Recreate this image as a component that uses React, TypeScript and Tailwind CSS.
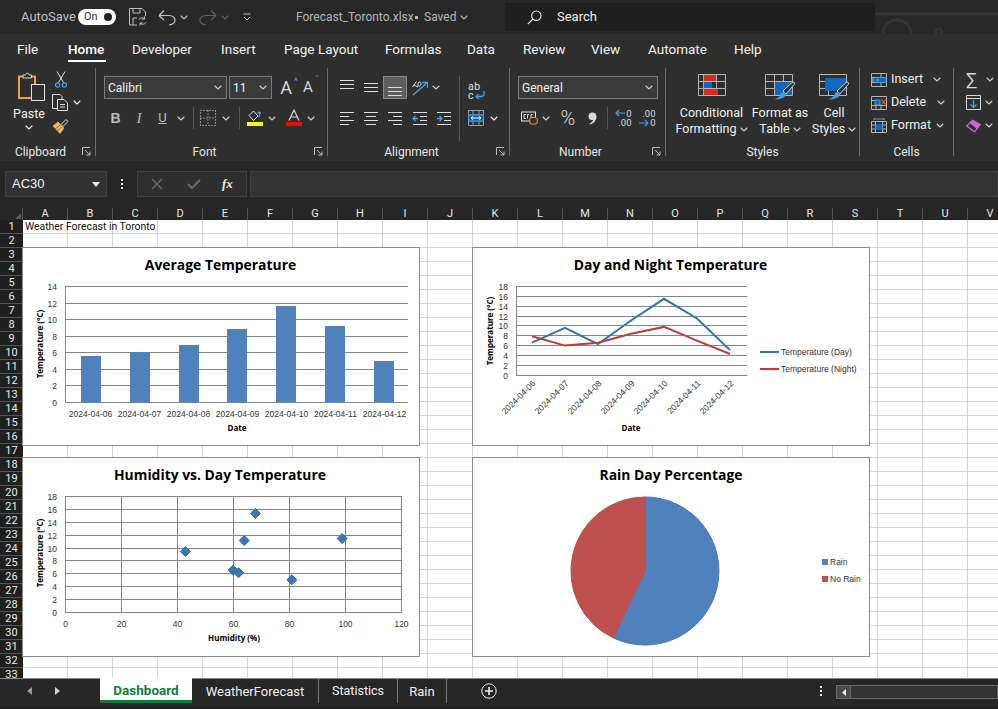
import React from 'react';

const COLS = ['A','B','C','D','E','F','G','H','I','J','K','L','M','N','O','P','Q','R','S','T','U','V'];
const ROWS = Array.from({ length: 33 }, (_, i) => i + 1);

const TABS: [string, string][] = [
  ['File', 'w-[51px]'],
  ['Home', 'w-[64px]'],
  ['Developer', 'w-[89px]'],
  ['Insert', 'w-[63px]'],
  ['Page Layout', 'w-[101px]'],
  ['Formulas', 'w-[82px]'],
  ['Data', 'w-[56px]'],
  ['Review', 'w-[68px]'],
  ['View', 'w-[57px]'],
  ['Automate', 'w-[86px]'],
  ['Help', 'w-[40px]'],
];
const DATES = ['2024-04-06','2024-04-07','2024-04-08','2024-04-09','2024-04-10','2024-04-11','2024-04-12'];

function Chevron({ className = 'text-[#d0d0d0]' }: { className?: string }) {
  return (
    <svg width="8" height="5" viewBox="0 0 8 5" className={`shrink-0 ${className}`}>
      <path d="M0.7 0.8 L4 4 L7.3 0.8" fill="none" stroke="currentColor" strokeWidth="1.2" />
    </svg>
  );
}

function Launcher() {
  return (
    <svg width="9" height="9" viewBox="0 0 9 9" className="absolute bottom-0 right-[4px] text-[#bdbdbd]">
      <path d="M0.5 8V0.5H8" fill="none" stroke="currentColor" />
      <path d="M3 3L8 8M8 4.5V8H4.5" fill="none" stroke="currentColor" />
    </svg>
  );
}

function Group({ label, launcher, className, children }: { label?: string; launcher?: boolean; className: string; children: React.ReactNode }) {
  return (
    <div className={`relative flex h-[88px] shrink-0 flex-col border-r border-[#6a6a6a] ${className}`}>
      <div className="h-[77px]">{children}</div>
      <div className={`h-[11px] text-center text-[12px] leading-[14px] text-[#e6e6e6] ${launcher ? 'pr-[14px]' : ''}`}>{label}</div>
      {launcher && <Launcher />}
    </div>
  );
}

function Slot({ className, children }: { className: string; children?: React.ReactNode }) {
  return <div className={`flex h-full shrink-0 items-center justify-center ${className}`}>{children}</div>;
}

function Lines({ rows }: { rows: number[] }) {
  return (
    <svg width="16" height="20" viewBox="0 0 16 20">
      {rows.map((y) => (
        <path key={y} d={`M1 ${y + 0.5}H15`} stroke="#e0e0e0" />
      ))}
    </svg>
  );
}

function AlignLeft() {
  return (
    <svg width="16" height="14" viewBox="0 0 16 14" stroke="#e0e0e0">
      <path d="M1 1.5H15M1 5.5H10M1 9.5H15M1 13.5H10" />
    </svg>
  );
}
function AlignCenter() {
  return (
    <svg width="16" height="14" viewBox="0 0 16 14" stroke="#e0e0e0">
      <path d="M1 1.5H15M3 5.5H13M1 9.5H15M3 13.5H13" />
    </svg>
  );
}
function AlignRight() {
  return (
    <svg width="16" height="14" viewBox="0 0 16 14" stroke="#e0e0e0">
      <path d="M1 1.5H15M6 5.5H15M1 9.5H15M6 13.5H15" />
    </svg>
  );
}
function Indent({ flip }: { flip?: boolean }) {
  return (
    <svg width="16" height="14" viewBox="0 0 16 14">
      <path d="M1 1.5H15M8 5.5H15M8 9.5H15M1 13.5H15" stroke="#e0e0e0" />
      {flip ? <path d="M1 7.5H6M3.5 5L6 7.5L3.5 10" fill="none" stroke="#3f9fe8" strokeWidth="1.3" /> : <path d="M6 7.5H1M3.5 5L1 7.5L3.5 10" fill="none" stroke="#3f9fe8" strokeWidth="1.3" />}
    </svg>
  );
}

function PasteIcon() {
  return (
    <svg width="28" height="30" viewBox="0 0 28 30" className="ml-[5px]">
      <path d="M1 4.5H17V26H1Z" fill="none" stroke="#e8a33a" strokeWidth="2" />
      <path d="M5 5V3H7.5C8 0.5 10.5 0.5 11 3H13.5V6H5Z" fill="#2e2e2e" stroke="#d8d8d8" />
      <rect x="13.5" y="12.5" width="13" height="16" fill="#2e2e2e" stroke="#e0e0e0" />
    </svg>
  );
}
function ScissorsIcon() {
  return (
    <svg width="12" height="17" viewBox="0 0 12 17" fill="none">
      <path d="M2 0.5L8.5 11.5M10 0.5L3.5 11.5" stroke="#e0e0e0" />
      <circle cx="2.6" cy="14" r="2.1" stroke="#4aa3e8" strokeWidth="1.2" />
      <circle cx="9.4" cy="14" r="2.1" stroke="#4aa3e8" strokeWidth="1.2" />
    </svg>
  );
}
function CopyIcon() {
  return (
    <svg width="17" height="17" viewBox="0 0 17 17" fill="none" stroke="#e0e0e0">
      <path d="M5 14.5H0.5V0.5H8L10 2.5V5" />
      <path d="M5.5 5.5H12L15.5 9V16.5H5.5Z" fill="#2e2e2e" />
      <path d="M8 10.5H13M8 13H13" />
    </svg>
  );
}
function BrushIcon() {
  return (
    <svg width="17" height="16" viewBox="0 0 17 16">
      <path d="M9 6.5L14 1.5L16 3.5L11 8.5Z" fill="none" stroke="#e0e0e0" />
      <path d="M1 8L6 4L12 10L8 15.5Z" fill="#f2c063" stroke="#e0a030" />
      <path d="M3 11L8 7M5 13L10 9" stroke="#8a6418" />
    </svg>
  );
}
function FillIcon() {
  return (
    <svg width="16" height="18" viewBox="0 0 16 18" fill="none">
      <path d="M2 6.5L6.5 2L11 7L6.5 11.5Z" stroke="#e0e0e0" />
      <path d="M11.5 8C13 7 13.5 4 12 3L10.5 4.5M12 3L14 4" stroke="#4aa3e8" strokeWidth="1.2" />
      <rect x="0" y="13" width="16" height="4" fill="#ffff00" />
    </svg>
  );
}
function FontColorIcon() {
  return (
    <svg width="16" height="18" viewBox="0 0 16 18" fill="none">
      <path d="M3 11.5L8 1L13 11.5M4.8 8H11.2" stroke="#e0e0e0" strokeWidth="1.1" />
      <rect x="0" y="13" width="16" height="4" fill="#ff0000" />
    </svg>
  );
}
function BorderIcon() {
  return (
    <svg width="16" height="16" viewBox="0 0 16 16" stroke="#e0e0e0" strokeDasharray="1 2" fill="none">
      <path d="M0.5 0.5H15.5V15.5H0.5ZM8 0.5V15.5M0.5 8H15.5" />
    </svg>
  );
}
function OrientIcon() {
  return (
    <svg width="16" height="16" viewBox="0 0 16 16" fill="none">
      <path d="M0.5 7L4.5 1.5M2 5L6 7M7 2C9 2 10 4 8 6C6 7 5 5 7 2" stroke="#e0e0e0" />
      <path d="M1 15L15 3M10 2.5H15.5V8" stroke="#4aa3e8" strokeWidth="1.3" />
    </svg>
  );
}
function WrapIcon() {
  return (
    <div className="relative h-[17px] w-[16px] text-[10.5px] leading-[8px] text-[#e0e0e0]">
      <div className="tracking-[0.5px]">ab</div>
      <div className="mt-[1px]">c</div>
      <svg width="10" height="9" viewBox="0 0 10 9" fill="none" className="absolute bottom-0 right-[-1px]">
        <path d="M9 0V3C9 5 7.5 5.5 6 5.5H1M3.5 3L1 5.5L3.5 8" stroke="#3f9fe8" strokeWidth="1.3" />
      </svg>
    </div>
  );
}
function MergeIcon() {
  return (
    <svg width="16" height="16" viewBox="0 0 16 16" fill="none" className="shrink-0">
      <path d="M0.5 0.5H15.5V15.5H0.5ZM0.5 5H15.5M0.5 11H15.5M5 0.5V5M11 0.5V5M5 11V15.5M11 11V15.5" stroke="#9a9a9a" />
      <rect x="0.5" y="5" width="15" height="6" fill="#0f5ca8" stroke="#3f9fe8" />
      <path d="M3 8H13M5 6.5L3 8L5 9.5M11 6.5L13 8L11 9.5" stroke="#ffffff" />
    </svg>
  );
}
function CurrencyIcon() {
  return (
    <svg width="17" height="14" viewBox="0 0 17 14" fill="none">
      <rect x="0.5" y="1" width="14" height="9" stroke="#e0e0e0" />
      <path d="M5 3.5H3V7.5H5M8 3.5H6.5V7.5M11.5 3.5H10V7.5" stroke="#e0e0e0" />
      <ellipse cx="12.5" cy="8" rx="3.7" ry="1.6" fill="#3a3020" stroke="#e8a33a" />
      <path d="M8.8 8V12C8.8 13.5 16.2 13.5 16.2 12V8" fill="#3a3020" stroke="#e8a33a" />
    </svg>
  );
}
function CommaIcon() {
  return (
    <svg width="9" height="13" viewBox="0 0 9 13">
      <path d="M4.5 0.5C7 0.5 8.5 2 8.5 4.5C8.5 8.5 5.5 11.5 2 12.5L1.5 11.5C3.5 10.5 5 9.3 5 8C2.5 8.5 0.5 7 0.5 4.5C0.5 2 2 0.5 4.5 0.5Z" fill="#d8d8d8" />
    </svg>
  );
}
function DecimalIcon({ more }: { more?: boolean }) {
  return (
    <div className="relative h-[18px] w-[17px] text-right text-[9.5px] leading-[9px] text-[#d8d8d8]">
      <div>{more ? '.00' : '0'}</div>
      <div>{more ? '0' : '.00'}</div>
      <svg width="10" height="8" viewBox="0 0 10 8" fill="none" className={`absolute left-0 ${more ? 'top-[10px]' : 'top-0'}`}>
        {more ? <path d="M0 4H9M6 1L9 4L6 7" stroke="#3f9fe8" strokeWidth="1.2" /> : <path d="M10 4H1M4 1L1 4L4 7" stroke="#3f9fe8" strokeWidth="1.2" />}
      </svg>
    </div>
  );
}

function BrushOverlay() {
  return (
    <g>
      <path d="M18 17L27 8.5C28.5 7.5 30 8.5 29.5 10L21 20Z" fill="#2e2e2e" stroke="#d0d0d0" />
      <path d="M8 25C12 25 15 23 16 19C18 17 21 18 21 20.5C20 24 14 26 8 25Z" fill="#3f9fe8" />
    </g>
  );
}
function GridLines() {
  return <path d="M0.5 0.5H27.5V21.5H0.5ZM0.5 7.5H27.5M0.5 14.5H27.5M9.5 0.5V21.5M18.5 0.5V21.5" fill="none" stroke="#b5b5b5" />;
}
function ConditionalIcon() {
  return (
    <svg width="28" height="22" viewBox="0 0 28 22">
      <GridLines />
      <rect x="5" y="1" width="13" height="6" fill="#d9281e" />
      <rect x="5" y="8" width="9" height="6" fill="#0f68c0" />
      <rect x="5" y="15" width="15" height="6" fill="#d9281e" />
      <path d="M5.5 1V21" stroke="#f08a80" />
    </svg>
  );
}
function TableIcon() {
  return (
    <svg width="30" height="26" viewBox="0 0 30 26">
      <GridLines />
      <rect x="10" y="8" width="17" height="13" fill="#0f68c0" />
      <BrushOverlay />
    </svg>
  );
}
function CellStyleIcon() {
  return (
    <svg width="30" height="26" viewBox="0 0 30 26">
      <GridLines />
      <rect x="1" y="1" width="26" height="3" fill="#2e2e2e" />
      <rect x="6" y="4" width="21" height="13" fill="#0f68c0" />
      <BrushOverlay />
    </svg>
  );
}
function InsertIcon() {
  return (
    <svg width="16" height="14" viewBox="0 0 16 14" fill="none" className="shrink-0">
      <path d="M0.5 0.5H15.5V13.5H0.5ZM0.5 4.5H15.5M0.5 9.5H15.5M10 0.5V13.5" stroke="#b5b5b5" />
      <rect x="6" y="4.5" width="9" height="5" fill="#0f68c0" stroke="#3f9fe8" />
      <path d="M8 7H1M3.5 4.5L1 7L3.5 9.5" stroke="#3f9fe8" strokeWidth="1.2" />
    </svg>
  );
}
function DeleteIcon() {
  return (
    <svg width="16" height="14" viewBox="0 0 16 14" fill="none" className="shrink-0">
      <path d="M0.5 0.5H15.5V13.5H0.5ZM0.5 9.5H15.5M5 9.5V13.5M10 9.5V13.5M0.5 4.5H7" stroke="#b5b5b5" />
      <rect x="4" y="4" width="5" height="5" fill="#0f68c0" stroke="#3f9fe8" />
      <path d="M10.5 3.5L15 8.5M15 3.5L10.5 8.5" stroke="#f0413a" strokeWidth="1.3" />
    </svg>
  );
}
function FormatIcon() {
  return (
    <svg width="16" height="15" viewBox="0 0 16 15" fill="none" className="shrink-0">
      <path d="M0.5 3.5H15.5V14.5H0.5ZM0.5 7H15.5M0.5 11H15.5M4.5 3.5V14.5M11.5 3.5V14.5" stroke="#b5b5b5" />
      <rect x="4.5" y="6" width="7" height="6" fill="#0f68c0" />
      <path d="M3 1H13M3 0V2M13 0V2" stroke="#3f9fe8" />
    </svg>
  );
}
function FillDownIcon() {
  return (
    <svg width="15" height="15" viewBox="0 0 15 15" fill="none" className="shrink-0">
      <path d="M0.5 0.5H14.5V14.5H0.5ZM0.5 3.5H14.5" stroke="#d8d8d8" />
      <path d="M7.5 5V12M4.5 9.5L7.5 12.5L10.5 9.5" stroke="#3f9fe8" strokeWidth="1.3" />
    </svg>
  );
}
function EraserIcon() {
  return (
    <svg width="15" height="14" viewBox="0 0 16 14" fill="none" className="shrink-0">
      <path d="M0.8 7L7 0.8L15.2 5.5L9 13.2Z" stroke="#c66ad8" strokeWidth="1.3" />
      <path d="M7 0.8L15.2 5.5L11.5 10L4 4Z" fill="#c66ad8" />
    </svg>
  );
}

function TitleBar() {
  return (
    <div className="flex h-[34px] items-center bg-[#272727] text-[13px] text-[#bfbfbf]">
      <div className="flex w-[296px] shrink-0 items-center pl-[21px]">
        <span className="w-[57px]">AutoSave</span>
        <div className="flex h-[16px] w-[38px] items-center justify-between rounded-full bg-white pl-[6px] pr-[4px] text-[11px] text-[#333333]">
          <span>On</span>
          <span className="h-[8px] w-[8px] rounded-full bg-[#222222]" />
        </div>
        <svg width="18" height="18" viewBox="0 0 18 18" fill="none" stroke="#bdbdbd" className="ml-[13px]">
          <path d="M0.5 0.5H13L16.5 4V8M8 17H0.5V0.5M4 0.5V5H11V0.5M4 17V10H8" />
          <path d="M10 12C10.5 9.5 14 9 15.5 11M17 14C16 16.5 13 17 11 15M15.5 8.5V11.2H12.8M11 17.5V15H13.7" />
        </svg>
        <svg width="18" height="18" viewBox="0 0 18 18" fill="none" stroke="#c4c4c4" strokeWidth="1.2" className="ml-[11px]">
          <path d="M1 7.5H11C15 7.5 17 10 17 12C17 15 15 16.5 11 17M1 7.5L6 2.5M1 7.5L6 12" />
        </svg>
        <Chevron className="ml-[4px] text-[#bdbdbd]" />
        <svg width="18" height="18" viewBox="0 0 18 18" fill="none" stroke="#5f5f5f" strokeWidth="1.2" className="ml-[11px]">
          <path d="M17 7.5H7C3 7.5 1 10 1 12C1 15 3 16.5 7 17M17 7.5L12 2.5M17 7.5L12 12" />
        </svg>
        <Chevron className="ml-[4px] text-[#5f5f5f]" />
        <svg width="8" height="8" viewBox="0 0 8 8" fill="none" stroke="#c4c4c4" className="ml-[14px]">
          <path d="M0.5 1H7.5M1 4L4 7L7 4" />
        </svg>
      </div>
      <div className="flex w-[209px] shrink-0 items-center text-[12px] text-[#b5b5b5]">
        <span className="w-[119px] whitespace-nowrap">Forecast_Toronto.xlsx</span>
        <span className="h-[3px] w-[3px] bg-[#b5b5b5]" />
        <span className="ml-[6px] w-[36px]">Saved</span>
        <Chevron className="text-[#b5b5b5]" />
      </div>
      <div className="flex h-[28px] w-[370px] items-center bg-[#1f1f1f] pl-[22px] text-[#f0f0f0]">
        <svg width="15" height="15" viewBox="0 0 15 15" fill="none" stroke="#e8e8e8" strokeWidth="1.1">
          <circle cx="9.3" cy="5.7" r="4.7" />
          <path d="M6 9L0.8 14.2" />
        </svg>
        <span className="ml-[15px]">Search</span>
      </div>
      <svg width="123" height="34" viewBox="0 0 123 34" fill="none" stroke="#333333" strokeWidth="3">
        <path d="M0 14H123" />
        <circle cx="22" cy="34" r="14" />
        <circle cx="64" cy="32" r="3" />
      </svg>
    </div>
  );
}

function TabRow() {
  return (
    <div className="flex h-[34px] items-start pl-[17px] pt-[6px] text-[13.5px] leading-[18px] text-[#f2f2f2]">
      {TABS.map(([tab, width]) => (
        <div key={tab} className={`relative shrink-0 ${width} ${tab === 'Home' ? 'font-medium text-white' : ''}`}>
          {tab}
          {tab === 'Home' && <div className="absolute bottom-[-4px] left-0 h-[2px] w-[38px] bg-white" />}
        </div>
      ))}
    </div>
  );
}

function Ribbon() {
  return (
    <div className="flex h-[93px] bg-[#2e2e2e] text-[12.5px] text-[#f0f0f0]">
      <Group label="Clipboard" launcher className="w-[96px]">
        <div className="flex h-full">
          <div className="flex w-[50px] flex-col items-center pl-[8px] pt-[4px]">
            <PasteIcon />
            <span className="mt-[3px] leading-[17px]">Paste</span>
            <Chevron className="mt-[3px]" />
          </div>
          <div className="flex flex-col pl-[2px]">
            <div className="flex h-[23px] items-center pl-[3px]"><ScissorsIcon /></div>
            <div className="flex h-[23px] items-center"><CopyIcon /><Chevron className="ml-[4px]" /></div>
            <div className="flex h-[23px] items-center"><BrushIcon /></div>
          </div>
        </div>
      </Group>

      <Group label="Font" launcher className="w-[232px]">
        <div className="h-[39px] pt-[8px]">
          <div className="flex h-[23px] items-center pl-[8px]">
            <div className="flex h-full w-[123px] items-center justify-between border border-[#7a7a7a] bg-[#3a3a3a] pl-[3px] pr-[4px] text-[12px]">
              <span>Calibri</span><Chevron />
            </div>
            <div className="ml-[2px] flex h-full w-[43px] items-center justify-between border border-[#7a7a7a] bg-[#3a3a3a] pl-[3px] pr-[4px] text-[12px]">
              <span>11</span><Chevron />
            </div>
            <Slot className="ml-[3px] w-[22px]">
              <span className="relative text-[18px] leading-none text-[#d8d8d8]">A<span className="absolute right-[-6px] top-[-2px] text-[9px] text-[#4aa3e8]">^</span></span>
            </Slot>
            <Slot className="ml-[1px] w-[20px]">
              <span className="relative text-[15px] leading-none text-[#d8d8d8]">A<span className="absolute right-[-6px] top-[-4px] text-[9px] text-[#4aa3e8]">ˇ</span></span>
            </Slot>
          </div>
        </div>
        <div className="flex h-[22px] items-center">
          <Slot className="ml-[8px] w-[23px] font-['Liberation_Sans',sans-serif] text-[14px] font-bold text-[#bdbdbd]">B</Slot>
          <Slot className="w-[24px] font-['Liberation_Serif',serif] text-[14px] italic text-[#bdbdbd]">I</Slot>
          <Slot className="w-[23px] text-[13px] text-[#bdbdbd] underline">U</Slot>
          <Slot className="w-[14px]"><Chevron /></Slot>
          <Slot className="ml-[5px] w-[1px] bg-[#555555]" />
          <Slot className="ml-[4px] w-[20px]"><BorderIcon /></Slot>
          <Slot className="w-[16px]"><Chevron /></Slot>
          <Slot className="ml-[5px] w-[1px] bg-[#555555]" />
          <Slot className="ml-[5px] w-[20px]"><FillIcon /></Slot>
          <Slot className="w-[14px]"><Chevron /></Slot>
          <Slot className="ml-[6px] w-[18px]"><FontColorIcon /></Slot>
          <Slot className="w-[16px]"><Chevron /></Slot>
        </div>
      </Group>

      <Group label="Alignment" launcher className="w-[182px]">
        <div className="flex h-full">
          <div className="w-[131px] pl-[7px]">
            <div className="h-[39px] pt-[8px]">
              <div className="flex h-[23px]">
                <Slot className="w-[24px]"><Lines rows={[2, 6, 10]} /></Slot>
                <Slot className="w-[24px]"><Lines rows={[5, 9, 13]} /></Slot>
                <Slot className="w-[24px] border border-[#8a8a8a] bg-[#5c5c5c]"><Lines rows={[9, 13, 17]} /></Slot>
                <Slot className="ml-[1px] w-[24px]"><OrientIcon /></Slot>
                <Slot className="w-[8px]"><Chevron /></Slot>
              </div>
            </div>
            <div className="flex h-[22px] items-center">
              <Slot className="w-[24px]"><AlignLeft /></Slot>
              <Slot className="w-[24px]"><AlignCenter /></Slot>
              <Slot className="w-[24px]"><AlignRight /></Slot>
              <Slot className="w-[25px]"><Indent /></Slot>
              <Slot className="w-[24px]"><Indent flip /></Slot>
            </div>
          </div>
          <div className="mt-[8px] h-[65px] w-[1px] bg-[#555555]" />
          <div className="w-[40px] pl-[8px]">
            <div className="flex h-[39px] items-center pt-[8px]"><WrapIcon /></div>
            <div className="flex h-[22px] items-center"><MergeIcon /><Chevron className="ml-[6px]" /></div>
          </div>
        </div>
      </Group>

      <Group label="Number" launcher className="w-[156px]">
        <div className="h-[39px] pl-[8px] pt-[8px]">
          <div className="flex h-[23px] w-[140px] items-center justify-between border border-[#7a7a7a] bg-[#3a3a3a] pl-[3px] pr-[4px] text-[12px]">
            <span>General</span><Chevron />
          </div>
        </div>
        <div className="flex h-[22px] items-center">
          <Slot className="ml-[9px] w-[20px]"><CurrencyIcon /></Slot>
          <Slot className="ml-[1px] w-[12px]"><Chevron /></Slot>
          <Slot className="ml-[5px] w-[22px] text-[20px] font-light text-[#d8d8d8]">%</Slot>
          <Slot className="ml-[3px] w-[20px]"><CommaIcon /></Slot>
          <Slot className="ml-[5px] w-[1px] bg-[#555555]" />
          <Slot className="ml-[3px] w-[24px]"><DecimalIcon /></Slot>
          <Slot className="w-[24px]"><DecimalIcon more /></Slot>
        </div>
      </Group>

      <Group label="Styles" className="w-[194px]">
        <div className="flex h-full items-start pt-[6px] text-center leading-[16px]">
          <div className="ml-[8px] flex w-[75px] flex-col items-center">
            <div className="h-[24px]"><ConditionalIcon /></div>
            <div className="mt-[7px]">Conditional</div>
            <div className="flex items-center gap-[3px] whitespace-nowrap">Formatting<Chevron /></div>
          </div>
          <div className="ml-[1px] flex w-[60px] flex-col items-center">
            <div className="h-[24px]"><TableIcon /></div>
            <div className="mt-[7px] whitespace-nowrap">Format as</div>
            <div className="flex items-center gap-[3px]">Table<Chevron /></div>
          </div>
          <div className="ml-[4px] flex w-[40px] flex-col items-center">
            <div className="h-[24px]"><CellStyleIcon /></div>
            <div className="mt-[7px]">Cell</div>
            <div className="flex items-center gap-[3px]">Styles<Chevron /></div>
          </div>
        </div>
      </Group>

      <Group label="Cells" className="w-[94px]">
        <div className="pl-[11px]">
          <div className="flex h-[23px] items-center gap-[4px]"><InsertIcon /><span className="w-[38px]">Insert</span><Chevron /></div>
          <div className="flex h-[23px] items-center gap-[4px]"><DeleteIcon /><span className="w-[42px]">Delete</span><Chevron /></div>
          <div className="flex h-[23px] items-center gap-[4px]"><FormatIcon /><span className="w-[41px]">Format</span><Chevron /></div>
        </div>
      </Group>

      <div className="pl-[12px]">
        <div className="flex h-[23px] items-center gap-[6px]"><span className="w-[14px] text-[18px] leading-none text-[#d8d8d8]">∑</span><Chevron /></div>
        <div className="flex h-[23px] items-center gap-[4px]"><FillDownIcon /><Chevron /></div>
        <div className="flex h-[23px] items-center gap-[4px]"><EraserIcon /><Chevron /></div>
      </div>
    </div>
  );
}

function FormulaBar() {
  return (
    <div className="flex h-[47px] items-start bg-[#262626] pb-[11px] pl-[5px] pt-[10px] font-['Liberation_Sans',sans-serif]">
      <div className="flex h-[26px] w-[102px] items-center justify-between border border-[#3f3f3f] bg-[#313131] pl-[6px] pr-[6px] text-[13px] text-[#e6f0fa]">
        <span>AC30</span>
        <svg width="8" height="5" viewBox="0 0 8 5"><path d="M0 0H8L4 5Z" fill="#f0f0f0" /></svg>
      </div>
      <div className="flex h-[26px] w-[30px] flex-col items-center justify-center gap-[2px]">
        <span className="h-[2px] w-[2px] bg-[#f0f0f0]" />
        <span className="h-[2px] w-[2px] bg-[#f0f0f0]" />
        <span className="h-[2px] w-[2px] bg-[#f0f0f0]" />
      </div>
      <div className="flex h-[26px] w-[110px] items-center border border-[#3f3f3f] bg-[#2e2e2e]">
        <svg width="12" height="12" viewBox="0 0 12 12" stroke="#666666" strokeWidth="1.5" className="ml-[13px]"><path d="M1 1L11 11M11 1L1 11" /></svg>
        <svg width="14" height="12" viewBox="0 0 14 12" stroke="#666666" strokeWidth="2" fill="none" className="ml-[24px]"><path d="M1 6L5 10L13 2" /></svg>
        <span className="ml-[21px] font-['Liberation_Serif',serif] text-[13px] font-bold italic text-[#e8e8e8]">fx</span>
      </div>
      <div className="ml-[3px] h-[26px] flex-1 border border-[#3f3f3f] bg-[#333333]" />
    </div>
  );
}

function ColumnHeader() {
  return (
    <div className="flex h-[12px] bg-[#262626] text-[11px] leading-[12px] text-[#e8e8e8]">
      <div className="relative w-[23px] shrink-0 border-r border-[#555555]">
        <svg width="6" height="6" viewBox="0 0 6 6" className="absolute bottom-[1px] right-[1px]"><path d="M6 0V6H0Z" fill="#5a5a5a" /></svg>
      </div>
      {COLS.map((c) => (
        <div key={c} className="w-[45px] shrink-0 border-r border-[#555555] text-center">{c}</div>
      ))}
    </div>
  );
}

function Sheet() {
  return (
    <div className="relative flex h-[458px] overflow-hidden bg-white text-[11px] leading-[13px]">
      <div className="w-[23px] shrink-0 bg-[#1f1f1f] text-[#e8e8e8]">
        {ROWS.map((r) => (
          <div key={r} className="h-[14px] border-b border-[#555555] text-center">{r}</div>
        ))}
      </div>
      <div className="shrink-0">
        {ROWS.map((r) => (
          <div key={r} className="flex h-[14px]">
            {COLS.map((c) => (
              <div key={c} className="h-[14px] w-[45px] shrink-0 border-b border-r border-[#d4d4d4]" />
            ))}
          </div>
        ))}
      </div>
      <span className="absolute left-[25px] top-0 text-[10.4px] text-[#111111]">Weather Forecast in Toronto</span>
      <AverageChart />
      <DayNightChart />
      <HumidityChart />
      <RainChart />
    </div>
  );
}

const tickClass = "fill-[#333333] font-['Liberation_Sans',sans-serif] text-[8.5px]";
const axisClass = "fill-black font-['Open_Sans',sans-serif] text-[8px] font-bold";
const titleClass = "fill-black font-['Open_Sans',sans-serif] text-[13.9px] font-bold";

function AverageChart() {
  const top = 286;
  const bottom = 402;
  const vals = [[81, 356], [130, 352], [179, 345], [227, 329], [276, 306], [325, 326], [374, 361]];
  return (
    <svg viewBox="23 248 396 197" className="absolute left-[22px] top-[27px] h-[199px] w-[398px] border border-[#8c8c8c] bg-white">
      <text x="220.5" y="270" textAnchor="middle" className={titleClass}>Average Temperature</text>
      {[0, 2, 4, 6, 8, 10, 12, 14].map((v) => {
        const y = Math.round(bottom - (v * (bottom - top)) / 14) + 0.5;
        return (
          <g key={v}>
            <path d={`M65 ${y}H408`} stroke="#868686" />
            <text x="57" y={y + 3} textAnchor="end" className={tickClass}>{v}</text>
          </g>
        );
      })}
      <path d={`M65.5 ${top}V${bottom}`} stroke="#868686" />
      {vals.map(([x, y]) => (
        <rect key={x} x={x} y={y} width="20" height={bottom - y + 0.5} fill="#4f81bd" />
      ))}
      {DATES.map((d, i) => (
        <text key={d} x={90.5 + i * 49} y="417" textAnchor="middle" className={tickClass}>{d}</text>
      ))}
      <text x="237" y="431" textAnchor="middle" className={axisClass}>Date</text>
      <text transform="translate(43 344) rotate(-90)" textAnchor="middle" className={axisClass}>Temperature (°C)</text>
    </svg>
  );
}

function DayNightChart() {
  const xs = [532, 565, 598, 631, 664, 697, 730];
  const toY = (v: number) => 374.7 - v * 4.93;
  const day = [6.5, 9.5, 6.2, 11, 15.4, 11.4, 5];
  const night = [7.8, 5.9, 6.5, 8.3, 9.7, 6.9, 4.2];
  const line = (vals: number[]) => vals.map((v, i) => `${xs[i]},${toY(v).toFixed(1)}`).join(' ');
  return (
    <svg viewBox="473 248 396 197" className="absolute left-[472px] top-[27px] h-[199px] w-[398px] border border-[#8c8c8c] bg-white">
      <text x="670.5" y="270" textAnchor="middle" className={titleClass}>Day and Night Temperature</text>
      {[0, 2, 4, 6, 8, 10, 12, 14, 16, 18].map((v) => {
        const y = Math.round(toY(v)) + 0.5;
        return (
          <g key={v}>
            <path d={`M516 ${y}H747`} stroke="#868686" />
            <text x="508" y={y + 3} textAnchor="end" className={tickClass}>{v}</text>
          </g>
        );
      })}
      <path d="M516.5 286V375" stroke="#868686" />
      <polyline points={line(day)} fill="none" stroke="#2a74b8" strokeWidth="2" />
      <polyline points={line(night)} fill="none" stroke="#bd3c36" strokeWidth="2" />
      {DATES.map((d, i) => (
        <text key={d} transform={`translate(${xs[i] + 4} 384) rotate(-45)`} textAnchor="end" className={tickClass}>{d}</text>
      ))}
      <text x="631" y="431" textAnchor="middle" className={axisClass}>Date</text>
      <text transform="translate(493 331) rotate(-90)" textAnchor="middle" className={axisClass}>Temperature (°C)</text>
      <path d="M760 352H779" stroke="#2a74b8" strokeWidth="2" />
      <path d="M760 369H779" stroke="#bd3c36" strokeWidth="2" />
      <text x="781" y="355" className={tickClass}>Temperature (Day)</text>
      <text x="781" y="372" className={tickClass}>Temperature (Night)</text>
    </svg>
  );
}

function HumidityChart() {
  const pts = [[43, 9.4], [60, 6.5], [62, 6.1], [64, 11.1], [68, 15.3], [81, 5], [99, 11.4]];
  const toX = (v: number) => 65 + v * 2.8;
  const toY = (v: number) => 612 - v * 6.44;
  return (
    <svg viewBox="23 458 396 198" className="absolute left-[22px] top-[237px] h-[200px] w-[398px] border border-[#8c8c8c] bg-white">
      <text x="220" y="480" textAnchor="middle" className={titleClass}>Humidity vs. Day Temperature</text>
      {[0, 2, 4, 6, 8, 10, 12, 14, 16, 18].map((v) => {
        const y = Math.round(toY(v)) + 0.5;
        return (
          <g key={v}>
            <path d={`M65 ${y}H402`} stroke="#868686" />
            <text x="57" y={y + 3} textAnchor="end" className={tickClass}>{v}</text>
          </g>
        );
      })}
      {[0, 20, 40, 60, 80, 100, 120].map((v) => {
        const x = Math.round(toX(v)) + 0.5;
        return (
          <g key={v}>
            <path d={`M${x} 496V612`} stroke="#868686" />
            <text x={x} y="627" textAnchor="middle" className={tickClass}>{v}</text>
          </g>
        );
      })}
      {pts.map(([a, b]) => {
        const x = toX(a);
        const y = toY(b);
        return <path key={a} d={`M${x - 5} ${y}L${x} ${y - 5}L${x + 5} ${y}L${x} ${y + 5}Z`} fill="#3c76b8" stroke="#2a6cb4" />;
      })}
      <text x="234" y="641" textAnchor="middle" className={axisClass}>Humidity (%)</text>
      <text transform="translate(43 553) rotate(-90)" textAnchor="middle" className={axisClass}>Temperature (°C)</text>
    </svg>
  );
}

function RainChart() {
  return (
    <svg viewBox="473 458 396 198" className="absolute left-[472px] top-[237px] h-[200px] w-[398px] border border-[#8c8c8c] bg-white">
      <text x="671" y="480" textAnchor="middle" className={titleClass}>Rain Day Percentage</text>
      <path d="M645 571V497A74 74 0 1 1 613.3 637.9Z" fill="#4f81bd" stroke="#3f78b8" />
      <path d="M645 571L613.3 637.9A74 74 0 0 1 645 497Z" fill="#c0504d" stroke="#b9504c" />
      <rect x="822" y="559" width="6" height="6" fill="#4f81bd" />
      <rect x="822" y="576" width="6" height="6" fill="#c0504d" />
      <text x="830" y="565" className={tickClass}>Rain</text>
      <text x="830" y="582" className={tickClass}>No Rain</text>
    </svg>
  );
}

function SheetTabs() {
  return (
    <div className="flex h-[28px] items-start border-t border-[#8a8a8a] bg-[#262626] text-[13px] text-[#f0f0f0]">
      <div className="flex h-[24px] w-[100px] items-center pl-[27px]">
        <svg width="5" height="8" viewBox="0 0 5 8"><path d="M5 0V8L0 4Z" fill="#9a9a9a" /></svg>
        <svg width="5" height="8" viewBox="0 0 5 8" className="ml-[23px]"><path d="M0 0V8L5 4Z" fill="#d0d0d0" /></svg>
      </div>
      <div className="mt-[-1px] flex h-[25px] w-[92px] items-center justify-center border-b-[3px] border-[#107c41] bg-white pt-[2px] text-[13.5px] font-bold text-[#107c41]">Dashboard</div>
      <div className="flex h-[24px] w-[127px] items-center justify-center border-r border-[#7a7a7a] pt-[1px]">WeatherForecast</div>
      <div className="flex h-[24px] w-[79px] items-center justify-center border-r border-[#7a7a7a] pt-[1px] text-[12.5px]">Statistics</div>
      <div className="flex h-[24px] w-[49px] items-center justify-center border-r border-[#7a7a7a] pt-[1px]">Rain</div>
      <div className="ml-[34px] flex h-[24px] items-center">
        <svg width="16" height="16" viewBox="0 0 16 16" fill="none" stroke="#f0f0f0">
          <circle cx="8" cy="8" r="7.2" />
          <path d="M8 4V12M4 8H12" strokeWidth="1.6" />
        </svg>
      </div>
      <div className="ml-[323px] flex h-[24px] flex-col items-center justify-center gap-[2px]">
        <span className="h-[2px] w-[2px] bg-[#f0f0f0]" />
        <span className="h-[2px] w-[2px] bg-[#f0f0f0]" />
        <span className="h-[2px] w-[2px] bg-[#f0f0f0]" />
      </div>
      <div className="ml-[14px] mt-[6px] flex h-[14px] flex-1 border border-[#6a6a6a] bg-[#333333]">
        <div className="flex w-[14px] items-center justify-center border-r border-[#6a6a6a] bg-[#4a4a4a]">
          <svg width="4" height="7" viewBox="0 0 4 7"><path d="M4 0V7L0 3.5Z" fill="#f0f0f0" /></svg>
        </div>
      </div>
    </div>
  );
}

export default function App() {
  return (
    <div className="h-[709px] w-[998px] overflow-hidden bg-[#1f1f1f] font-['Roboto',sans-serif]">
      <TitleBar />
      <div className="bg-[#2e2e2e]">
        <TabRow />
      </div>
      <Ribbon />
      <FormulaBar />
      <ColumnHeader />
      <Sheet />
      <SheetTabs />
    </div>
  );
}
